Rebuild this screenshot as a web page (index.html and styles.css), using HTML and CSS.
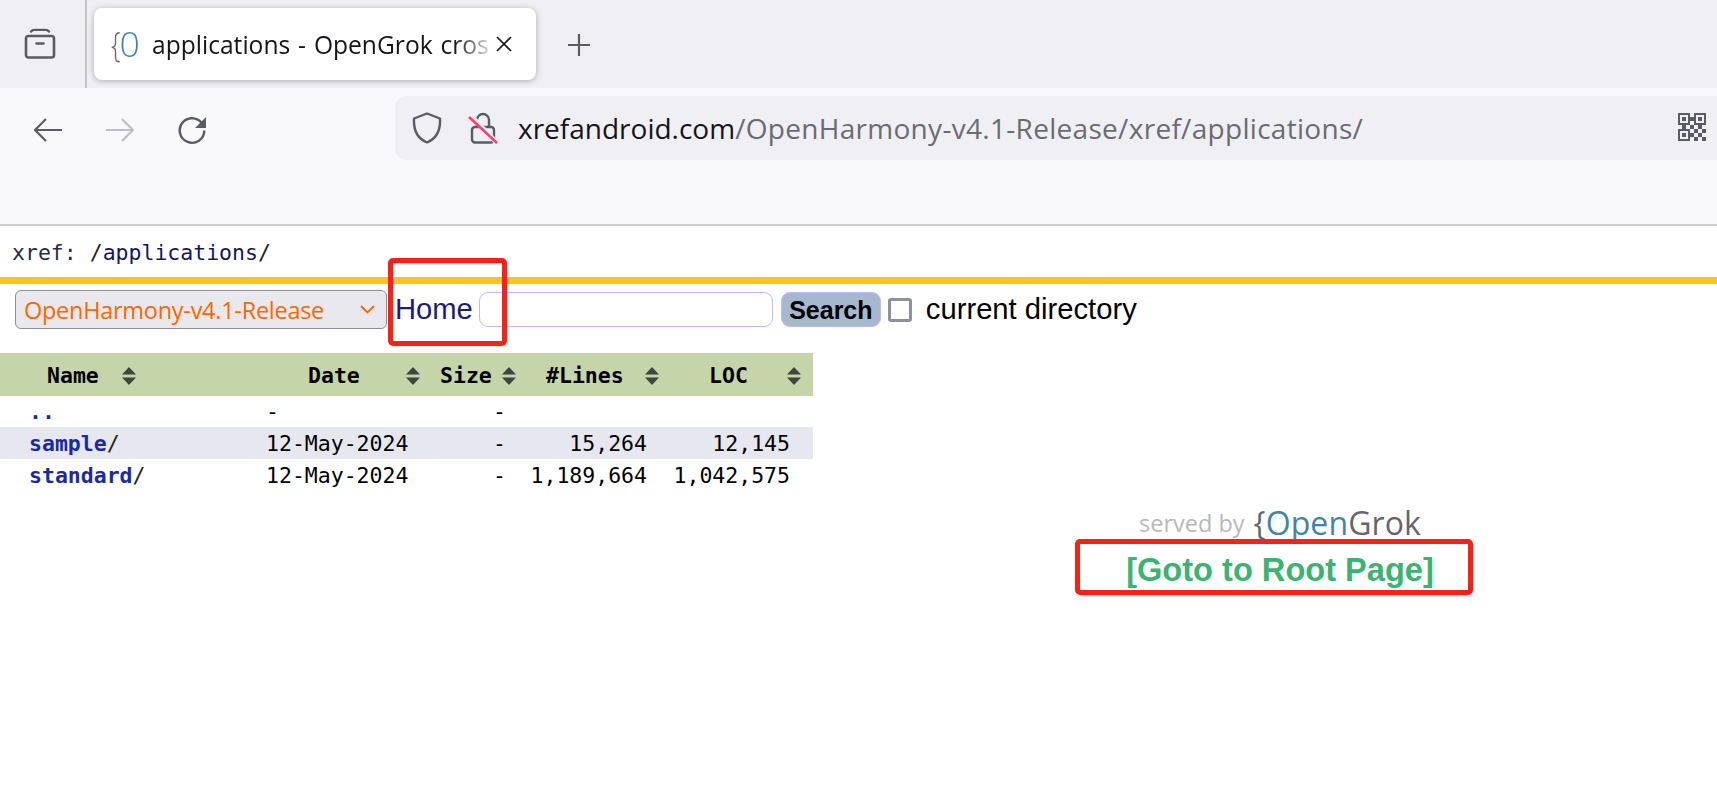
FILE: index.html
```html
<!DOCTYPE html>
<html lang="en">
<head>
<meta charset="utf-8">
<title>applications - OpenGrok cross reference</title>
<link rel="stylesheet" href="styles.css">
</head>
<body>
<header class="chrome">
  <div class="tabstrip">
    <div class="tabs-btn">
      <svg class="ic-box" viewBox="0 0 32 32" width="32" height="32"><path d="M7 3.5c1-1.2 2-1.6 3.5-1.6h11c1.500 0 2.500 .4 3.500 1.600" fill="none" stroke="#5b5b66" stroke-width="2.400" stroke-linecap="round"/><rect x="2" y="8" width="28" height="21.500" rx="2.500" fill="none" stroke="#5b5b66" stroke-width="2.600"/><path d="M12.500 15.500h7" stroke="#5b5b66" stroke-width="2.600" stroke-linecap="round"/></svg>
    </div>
    <div class="divider"></div>
    <div class="tab">
      <span class="favicon"><span class="fav-brace">{</span><span class="fav-o">0</span></span>
      <span class="tab-title">applications - OpenGrok cros</span>
      <svg class="tab-close" viewBox="0 0 16 16" width="16" height="16"><path d="M1 1l14 14M15 1L1 15" stroke="#15141a" stroke-width="1.700"/></svg>
    </div>
    <svg class="new-tab" viewBox="0 0 24 24" width="24" height="24"><path d="M12 1v22M1 12h22" stroke="#5b5b66" stroke-width="2.200"/></svg>
  </div>
  <div class="toolbar">
    <div class="nav-buttons">
      <svg viewBox="0 0 30 26" width="30" height="26"><path d="M29 13H2M13 2L2 13l11 11" fill="none" stroke="#5b5b66" stroke-width="2.200" stroke-linejoin="round"/></svg>
      <svg viewBox="0 0 30 26" width="30" height="26"><path d="M1 13h27M17 2l11 11-11 11" fill="none" stroke="#bdbdc3" stroke-width="2.200" stroke-linejoin="round"/></svg>
      <svg viewBox="0 0 30 28" width="30" height="28"><path d="M26 8A12.300 12.300 0 1 0 27.300 13.500" fill="none" stroke="#5b5b66" stroke-width="2.400"/><path d="M29 0v11H18z" fill="#5b5b66"/></svg>
    </div>
    <div class="urlbar">
      <svg class="ic-shield" viewBox="0 0 30 32" width="30" height="32"><path d="M15 1.500L28 6.500c.5 9-1 19-13 24C3 25.500 1.500 15.500 2 6.500z" fill="none" stroke="#5b5b66" stroke-width="2.400" stroke-linejoin="round"/></svg>
      <svg class="ic-lock" viewBox="0 0 30 32" width="30" height="32"><rect x="4" y="15" width="22" height="15.500" rx="3" fill="none" stroke="#5b5b66" stroke-width="2.400"/><path d="M9 15V8a6 6 0 0 1 12 0v7" fill="none" stroke="#5b5b66" stroke-width="2.400"/><path d="M2 3l27 28" stroke="#f0f0f4" stroke-width="5"/><path d="M1 5l28 26" stroke="#ff3b6b" stroke-width="2.400"/></svg>
      <span class="url"><span class="url-host">xrefandroid.com</span><span class="url-path">/OpenHarmony-v4.1-Release/xref/applications/</span></span>
      <svg class="ic-qr" viewBox="0 0 29 29" width="29" height="29"><path fill="#5b5b66" fill-rule="evenodd" d="M0 0h12v12H0zM2 2v8h8V2zM4 4h4v4H4zM16 0h12v12H16zM18 2v8h8V2zM20 4h4v4h-4zM0 16h12v12H0zM2 18v8h8v-8zM4 20h4v4H4zM12 4h4v4h-4zM4 12h4v4H4zM12 12h4v4h-4zM20 12h4v4h-4zM16 16h4v4h-4zM24 16h4v4h-4zM12 20h4v4h-4zM20 20h4v4h-4zM16 24h4v4h-4zM24 24h4v4h-4z"/></svg>
    </div>
  </div>
</header>

<main class="page">
  <div class="crumbs"><span class="crumb-label">xref: </span><span class="crumb-slash">/</span><a class="crumb-link" href="#">applications</a><span class="crumb-slash">/</span></div>
  <div class="rule"></div>
  <form class="search-row">
    <div class="select">
      <span class="select-text">OpenHarmony-v4.1-Release</span>
      <svg class="select-arrow" viewBox="0 0 15 9" width="15" height="9"><path d="M1 1l6.500 6.500L14 1" fill="none" stroke="#ff6600" stroke-width="1.800"/></svg>
    </div>
    <a class="home" href="#">Home</a>
    <input class="query" type="text">
    <button class="search-btn" type="button">Search</button>
    <input class="check" type="checkbox">
    <span class="check-label">current directory</span>
  </form>

  <table class="files">
    <colgroup><col class="c-name"><col class="c-date"><col class="c-size"><col class="c-lines"><col class="c-loc"></colgroup>
    <thead>
      <tr>
        <th class="h-name"><span>Name</span><svg class="sort" viewBox="0 0 14 18" width="14" height="18"><path d="M7 0l7 7.500H0zM7 18l7-7.500H0z"/></svg></th>
        <th class="h-date"><span>Date</span><svg class="sort" viewBox="0 0 14 18" width="14" height="18"><path d="M7 0l7 7.500H0zM7 18l7-7.500H0z"/></svg></th>
        <th class="h-size"><span>Size</span><svg class="sort" viewBox="0 0 14 18" width="14" height="18"><path d="M7 0l7 7.500H0zM7 18l7-7.500H0z"/></svg></th>
        <th class="h-lines"><span>#Lines</span><svg class="sort" viewBox="0 0 14 18" width="14" height="18"><path d="M7 0l7 7.500H0zM7 18l7-7.500H0z"/></svg></th>
        <th class="h-loc"><span>LOC</span><svg class="sort" viewBox="0 0 14 18" width="14" height="18"><path d="M7 0l7 7.500H0zM7 18l7-7.500H0z"/></svg></th>
      </tr>
    </thead>
    <tbody>
      <tr class="first"><td class="d-name"><a href="#">..</a></td><td class="d-date">-</td><td class="d-size">-</td><td class="d-lines"></td><td class="d-loc"></td></tr>
      <tr class="alt"><td class="d-name"><a href="#">sample</a>/</td><td class="d-date">12-May-2024</td><td class="d-size">-</td><td class="d-lines">15,264</td><td class="d-loc">12,145</td></tr>
      <tr><td class="d-name"><a href="#">standard</a>/</td><td class="d-date">12-May-2024</td><td class="d-size">-</td><td class="d-lines">1,189,664</td><td class="d-loc">1,042,575</td></tr>
    </tbody>
  </table>

  <footer class="footer">
    <div class="served"><span class="served-by">served by</span><span class="logo"><span class="logo-brace">{</span><span class="logo-open">Open</span><span class="logo-grok">Grok</span></span></div>
    <a class="root-link" href="#">[Goto to Root Page]</a>
  </footer>
  <div class="mark mark-home"></div>
  <div class="mark mark-root"></div>
</main>
</body>
</html>
```
FILE: styles.css
```css
* { box-sizing: border-box; }
html, body { margin: 0; padding: 0; height: 100%; overflow: hidden; background: #fff; }
body { font-family: "Liberation Sans", Arial, sans-serif; }

/* browser chrome */
.chrome { height: 226px; border-bottom: 2px solid #cfcfd3; background: #f9f9fb; font-family: "Open Sans", "Noto Sans", sans-serif; }
.tabstrip { height: 88px; background: #f0f0f4; display: flex; align-items: flex-start; }
.tabs-btn { width: 85px; height: 88px; padding: 28px 0 0 24px; }
.ic-box { display: block; }
.divider { width: 2px; height: 88px; background: #c2c2c8; }
.tab { margin: 8px 0 0 7px; width: 442px; height: 72px; background: #fff; border-radius: 8px; box-shadow: 0 1px 6px rgba(0,0,0,.28); display: flex; align-items: center; padding-left: 17px; }
.favicon { width: 41px; flex: none; display: flex; align-items: center; font-family: "Open Sans", sans-serif; font-weight: 300; font-size: 34px; line-height: 40px; }
.fav-brace { color: #666; display: inline-block; transform: scaleX(.8); width: 10px; margin-left: -1px; }
.fav-o { color: #3f84ab; display: inline-block; transform: scaleX(1.05); }
.tab-title { width: 344px; flex: none; white-space: nowrap; overflow: hidden; font-size: 24.600px; word-spacing: 1.500px; color: #15141a; -webkit-mask-image: linear-gradient(to right, #000 88%, transparent 100%); mask-image: linear-gradient(to right, #000 88%, transparent 100%); }
.tab-close { flex: none; }
.new-tab { margin: 33px 0 0 31px; flex: none; }

.toolbar { height: 136px; display: flex; align-items: flex-start; padding-top: 8px; }
.nav-buttons { width: 395px; flex: none; display: flex; gap: 42px; padding: 21px 0 0 33px; align-items: flex-start; }
.urlbar { flex: 1; height: 64px; background: #f0f0f4; border-radius: 12px 0 0 12px; display: flex; align-items: center; padding-left: 17px; }
.ic-lock { margin-left: 26px; flex: none; }
.url { margin-left: 20px; font-size: 28px; white-space: nowrap; flex: 1; }
.url-host { color: #15141a; }
.url-path { color: #6b6b73; letter-spacing: .3px; }
.ic-qr { flex: none; margin: -2px 10px 0 0; }

/* page */
.page { position: relative; color: #15155f; }
.crumbs { height: 51px; padding: 11px 0 0 12px; font: 21.5px/32px "DejaVu Sans Mono", monospace; color: #222; white-space: pre; }
.crumb-label { color: #2a2a4a; }
.crumb-link { color: #15155f; text-decoration: none; }
.rule { height: 7px; background: #ffc328; }

.search-row { display: flex; align-items: center; padding: 6px 0 0 15px; margin: 0; height: 45px; }
.select { width: 372px; height: 39px; flex: none; display: flex; align-items: center; justify-content: space-between; background: #e9e9ed; border: 1px solid #8f8f9d; border-radius: 6px; padding: 0 11px 0 8px; font-family: "Open Sans", "Noto Sans", sans-serif; font-size: 23.500px; letter-spacing: -.27px; color: #ff6600; }
.home { margin-left: 8px; font-size: 29.200px; color: #1c1c78; text-decoration: none; }
.query { margin-left: 6px; width: 294px; height: 35px; flex: none; border: 1px solid #bbbbff; border-radius: 9px; background: #fff; padding: 0; }
.search-btn { margin-left: 8px; width: 100px; height: 35px; flex: none; border: 1px solid #bbbbff; border-radius: 9px; background: #a6b8cd; font: bold 25px "Liberation Sans", sans-serif; color: #000; padding: 1px 0 0; }
.check { appearance: none; margin: 0 0 0 7px; width: 24px; height: 24px; flex: none; border: 3px solid #8f8f9d; border-radius: 3px; background: #fff; }
.check-label { margin-left: 14px; font-size: 29.200px; color: #000; }

.files { margin-top: 24px; width: 813px; table-layout: fixed; border-collapse: collapse; font: 21.500px/32px "DejaVu Sans Mono", monospace; color: #000; }
.c-name { width: 257px; } .c-date { width: 172px; } .c-size { width: 86px; } .c-lines { width: 145px; } .c-loc { width: 153px; }
.files th { height: 43px; padding: 2px 0 0; background: #c6d4a9; font-weight: bold; text-align: left; white-space: nowrap; }
.files th span { display: inline-block; }
.sort { vertical-align: -2px; fill: #3b4740; }
.h-name { padding-left: 47px !important; } .h-name .sort { margin-left: 23px; }
.h-date { padding-left: 51px !important; } .h-date .sort { margin-left: 46px; }
.h-size { padding-left: 11px !important; } .h-size .sort { margin-left: 10px; }
.h-lines { padding-left: 31px !important; } .h-lines .sort { margin-left: 21px; }
.h-loc { padding-left: 49px !important; } .h-loc .sort { margin-left: 39px; }
.files td { height: 32px; padding: 1px 0 0; line-height: 31px; white-space: nowrap; }
.files .first td { height: 31px; padding-top: 0; line-height: 31px; }
.files .alt td { background: #e6e7ef; }
.d-name { padding-left: 29px !important; color: #222; }
.d-name a { color: #1c2aa0; font-weight: bold; text-decoration: none; }
.d-date { padding-left: 9px !important; }
.d-size { padding-right: 9px !important; text-align: right; }
.d-lines { padding-right: 13px !important; text-align: right; }
.d-loc { padding-right: 23px !important; text-align: right; }

.footer { padding: 0 0 0 843px; text-align: center; }
.served { display: flex; justify-content: center; align-items: flex-end; gap: 9px; height: 52px; margin-bottom: 5px; }
.served-by { font: 23.500px/30px "Open Sans", sans-serif; color: #b8b8b8; padding-bottom: 5px; }
.logo { font: 400 32px/40px "Open Sans", sans-serif; letter-spacing: .1px; }
.logo-brace { color: #5f6b73; }
.logo-open { color: #3f84ab; }
.logo-grok { color: #666; }
.root-link { display: inline-block; font: bold 32.600px/44px "Liberation Sans", sans-serif; color: #3cb371; text-decoration: none; }

/* red annotation boxes drawn over the screenshot */
.mark { position: absolute; border: 5.500px solid #ff2015; border-radius: 5px; }
.mark-home { left: 388px; top: 32px; width: 119px; height: 88px; }
.mark-root { left: 1075px; top: 313px; width: 398px; height: 56px; }
```
